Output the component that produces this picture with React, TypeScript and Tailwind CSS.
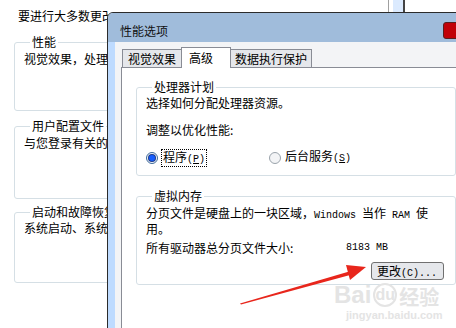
import React from 'react'

function Mono({ children }: { children: React.ReactNode }) {
  return <span className="font-['Liberation_Mono',monospace] text-[10px]">{children}</span>
}

function Group({ label, className, children }: { label: string; className?: string; children?: React.ReactNode }) {
  return (
    <fieldset className={`border border-[#d5dfe5] rounded-[3px] ${className ?? ''}`}>
      <legend className="ml-[6px] px-[2px] leading-[16px]">{label}</legend>
      {children}
    </fieldset>
  )
}

function Radio({ checked }: { checked?: boolean }) {
  return (
    <span
      className={`w-[12px] h-[12px] rounded-full border flex items-center justify-center bg-gray-100 ${
        checked ? 'border-[#3d6a9c]' : 'border-[#9aa3ab]'
      }`}
    >
      {checked && <span className="w-[6px] h-[6px] rounded-full bg-blue-600 ring-1 ring-blue-900" />}
    </span>
  )
}

export default function App() {
  return (
    <div className="relative w-[456px] h-[328px] overflow-hidden bg-white text-[12px] leading-[16px] text-black font-['Noto_Sans_CJK_SC',sans-serif]">
      {/* background window, clipped where the dialog covers it */}
      <div className="pt-[8px] pl-[14px]">
        <div className="ml-[4px] w-[90px] overflow-hidden whitespace-nowrap">要进行大多数更改</div>
        <Group label="性能" className="mt-[10px] w-[340px] h-[77px] px-[9px]">
          <div className="pt-[1px] w-[84px] overflow-hidden whitespace-nowrap">视觉效果，处理</div>
        </Group>
        <Group label="用户配置文件" className="mt-[7px] w-[340px] h-[81px] px-[9px]">
          <div className="pt-[1px] w-[84px] overflow-hidden whitespace-nowrap">与您登录有关的</div>
        </Group>
        <Group label="启动和故障恢复" className="mt-[5px] w-[340px] h-[79px] px-[9px]">
          <div className="w-[84px] overflow-hidden whitespace-nowrap">系统启动、系统</div>
        </Group>
      </div>

      {/* scrollbar fragment of the window behind */}
      <div className="absolute left-[388px] top-0 w-[17px] h-[12px] border-l border-[#a0a0a0] border-r-2 border-r-[#444] bg-white pl-[4px]">
        <div className="h-full bg-blue-100" />
      </div>

      {/* 性能选项 dialog */}
      <div className="absolute left-[107px] top-[12px] w-[370px] h-[330px] border border-[#2b2b2b] rounded-tl-[6px] bg-blue-200 flex flex-col overflow-hidden">
        <div className="h-[29px] shrink-0 bg-[rgb(160,188,219)] flex items-center pt-[6px] pl-[12px] text-[#111]">
          性能选项
        </div>
        <div className="absolute left-[335px] top-[9px] w-[40px] h-[17px] rounded-[3px] border border-[#5a1e1e] bg-red-700" />
        <div className="flex-1 ml-[7px] bg-gray-100 pl-[6px] pt-[5px] flex flex-col">
          <div className="relative z-10 flex items-end h-[20px] pl-[1px]">
            <div className="h-[18px] px-[5px] border border-b-0 border-[#898c95] bg-gray-200 flex items-center">视觉效果</div>
            <div className="h-[21px] -mb-px w-[50px] pl-[7px] border border-b-0 border-[#898c95] bg-white flex items-center -ml-[1px]">高级</div>
            <div className="h-[18px] px-[4px] border border-b-0 border-[#898c95] bg-gray-200 flex items-center -ml-[1px]">数据执行保护</div>
          </div>
          <div className="flex-1 border-l border-t border-[#898c95] bg-white pl-[14px] pt-[11px]">
            <Group label="处理器计划" className="w-[320px] h-[97px] pl-[9px]">
              <div>选择如何分配处理器资源。</div>
              <div className="mt-[11px]">调整以优化性能:</div>
              <div className="mt-[10px] flex items-center">
                <Radio checked />
                <span className="ml-[3px] px-[1px] border border-dotted border-black leading-[13px]">
                  程序<Mono>(<span className="underline">P</span>)</Mono>
                </span>
                <span className="ml-[62px]"><Radio /></span>
                <span className="ml-[4px]">
                  后台服务<Mono>(<span className="underline">S</span>)</Mono>
                </span>
              </div>
            </Group>
            <Group label="虚拟内存" className="mt-[12px] w-[320px] h-[97px] pl-[9px]">
              <div className="leading-[13px] pt-[2px] whitespace-nowrap">
                <div>
                  分页文件是硬盘上的一块区域，<Mono>Windows </Mono>当作<Mono> RAM </Mono>使
                </div>
                <div>用。</div>
              </div>
              <div className="mt-[5px] flex items-center whitespace-nowrap">
                <span className="w-[200px]">所有驱动器总分页文件大小:</span>
                <Mono>8183 MB</Mono>
              </div>
              <div className="mt-[6px] flex justify-end pr-[11px]">
                <button className="w-[73px] h-[18px] border border-[#707070] rounded-[3px] bg-gray-200 text-left pl-[5px] leading-[16px]">
                  更改<Mono>(C)...</Mono>
                </button>
              </div>
            </Group>
          </div>
        </div>
      </div>

      {/* watermark */}
      <div className="absolute left-[334px] top-[283px] text-[#e4e4e4] leading-none pointer-events-none">
        <div className="flex items-end gap-[2px] font-['Liberation_Sans',sans-serif] font-bold">
          <span className="text-[24px]">Bai</span>
          <span className="text-[16px] w-[24px] h-[24px] rounded-full border-2 border-[#e4e4e4] flex items-center justify-center">du</span>
          <span className="text-[20px] font-['Noto_Sans_CJK_SC',sans-serif]">经验</span>
        </div>
        <div className="mt-[3px] ml-[12px] text-[11px] font-['Liberation_Sans',sans-serif] font-bold">jingyan.baidu.com</div>
      </div>

      {/* annotation arrow */}
      <svg className="absolute inset-0 pointer-events-none" width="456" height="328" viewBox="0 0 456 328">
        <polygon points="240,303.5 350,271.2 351,274.8 241,304.5" fill="#e8261c" />
        <polygon points="346,265 366,267 350,280" fill="#e8261c" />
      </svg>
    </div>
  )
}
